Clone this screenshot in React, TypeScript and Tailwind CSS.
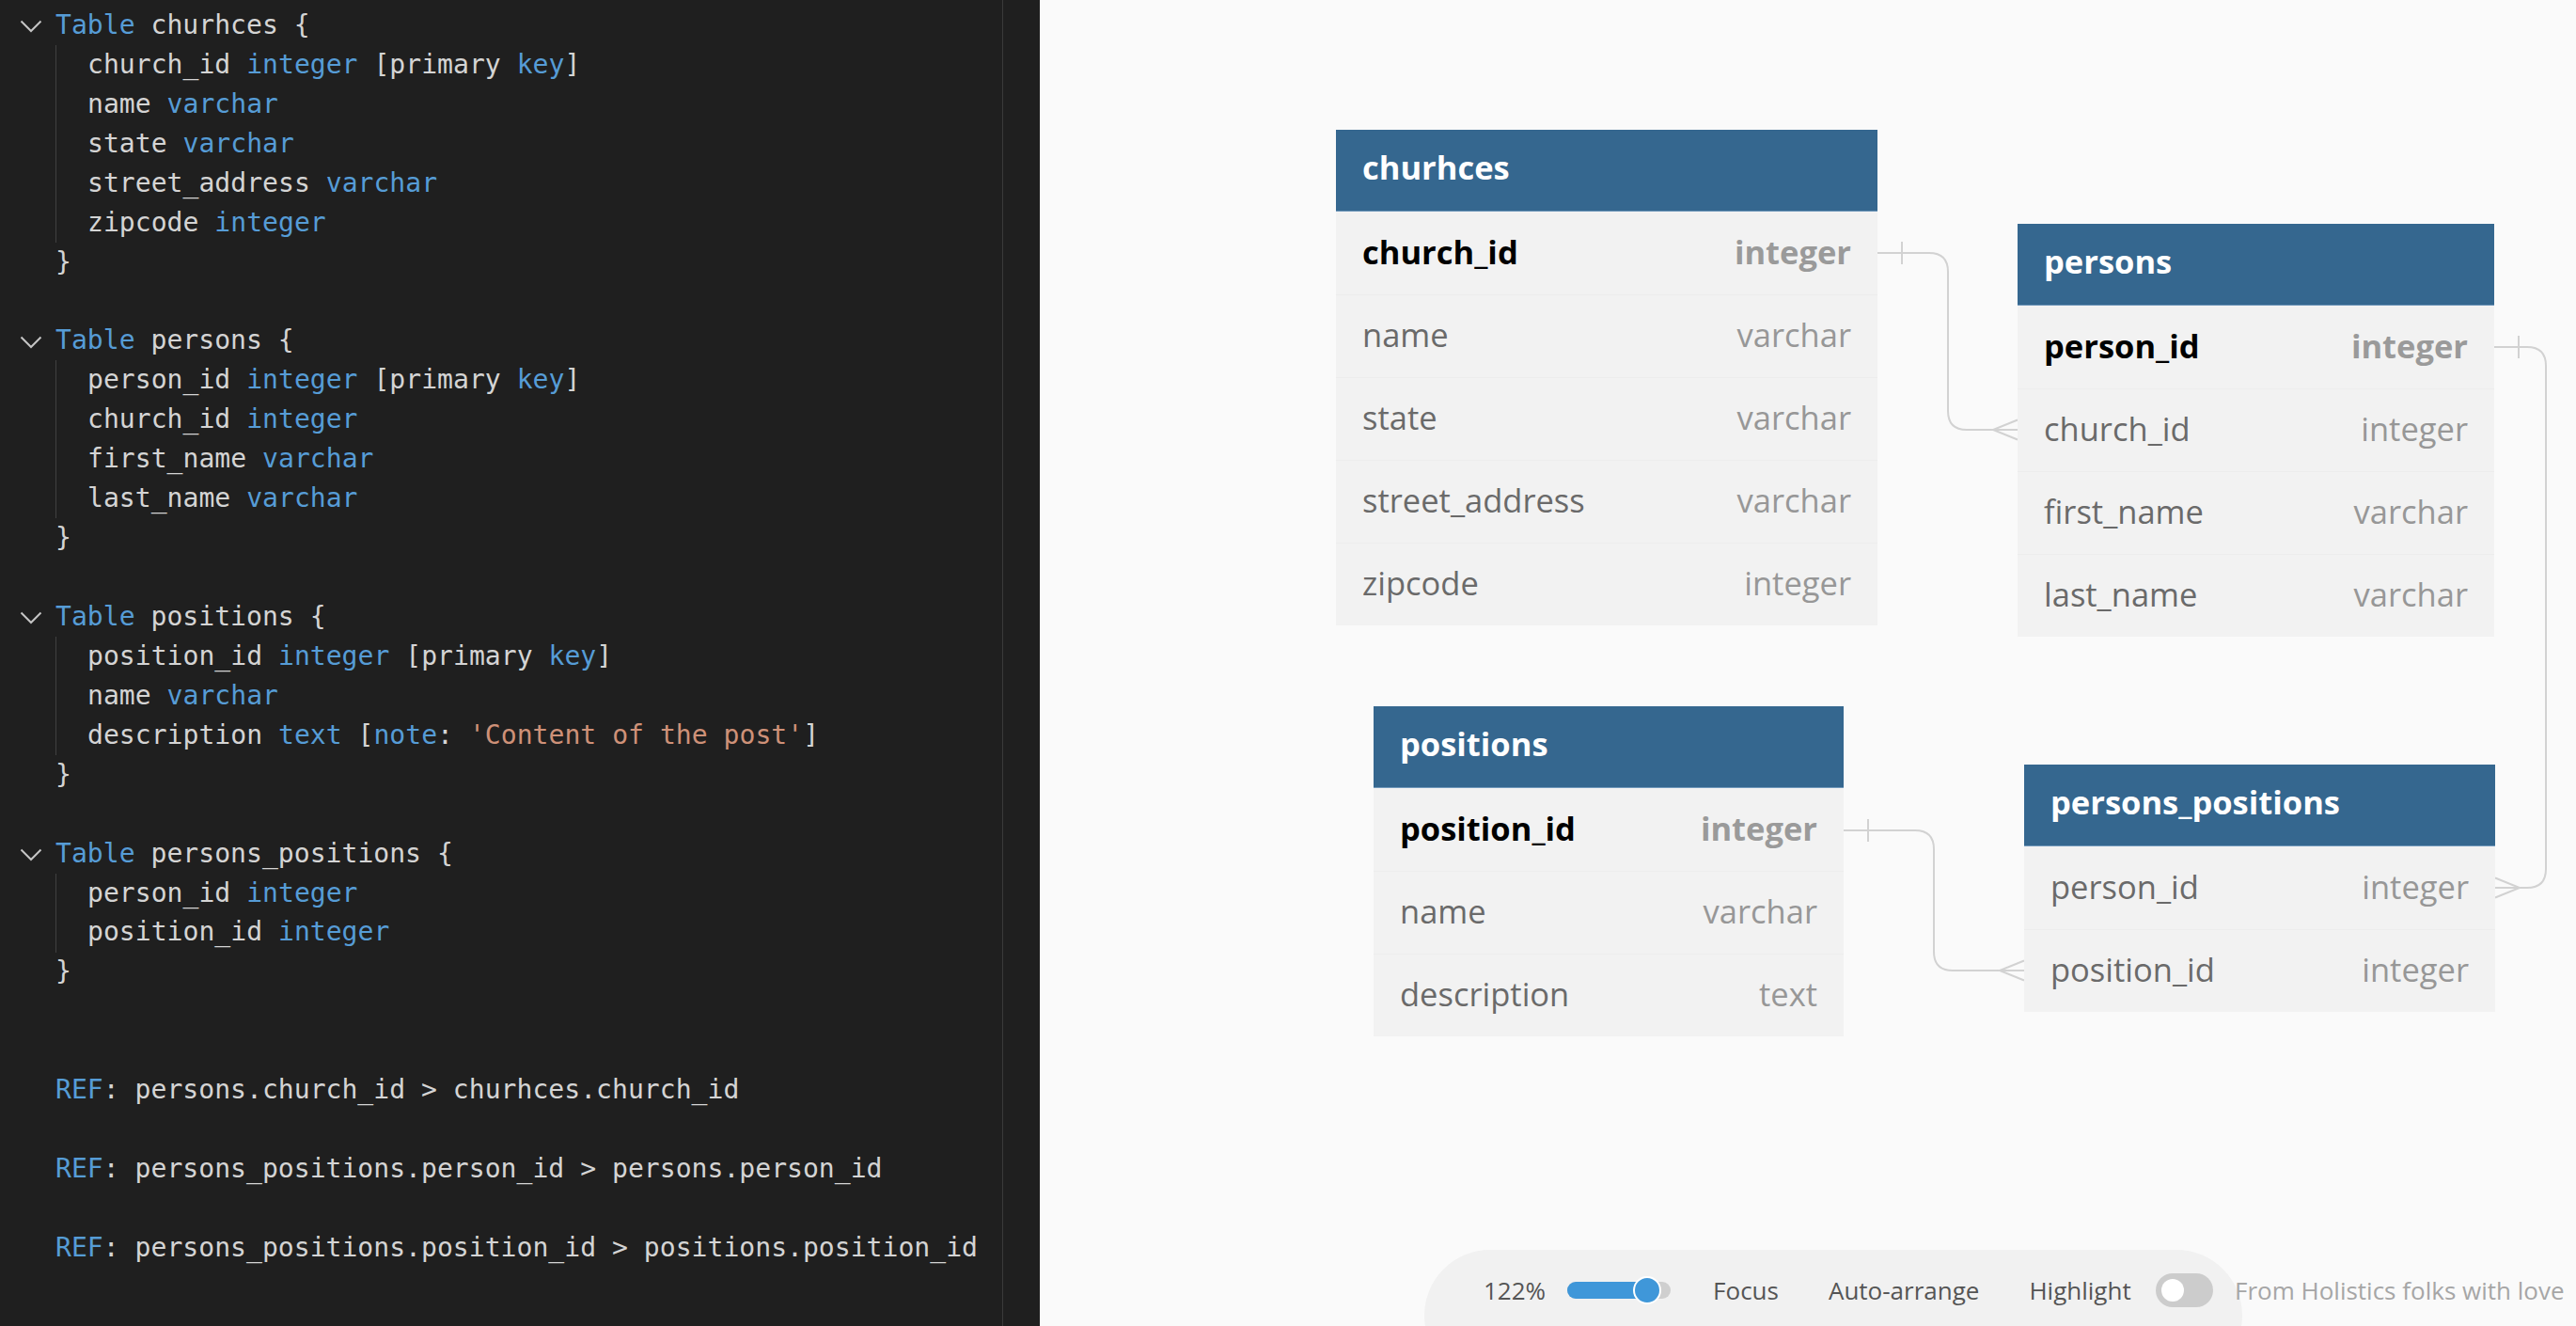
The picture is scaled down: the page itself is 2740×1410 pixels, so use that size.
import React from 'react';

type Tok = [string, 'k' | 't' | 's'];
type Line =
  | { kind: 'table'; name: string }
  | { kind: 'field'; toks: Tok[] }
  | { kind: 'close' }
  | { kind: 'blank' }
  | { kind: 'ref'; text: string };

const TONE = {
  k: 'text-[#569cd6]',
  t: 'text-[#d4d4d4]',
  s: 'text-[#ce9178]',
};

const f = (name: string, type: string, extra?: Tok[]): Line => ({
  kind: 'field',
  toks: [[name + ' ', 't'], [type, 'k'], ...(extra ?? [])],
});
const pk: Tok[] = [[' [primary ', 't'], ['key', 'k'], [']', 't']];

const LINES: Line[] = [
  { kind: 'table', name: 'churhces' },
  f('church_id', 'integer', pk),
  f('name', 'varchar'),
  f('state', 'varchar'),
  f('street_address', 'varchar'),
  f('zipcode', 'integer'),
  { kind: 'close' },
  { kind: 'blank' },
  { kind: 'table', name: 'persons' },
  f('person_id', 'integer', pk),
  f('church_id', 'integer'),
  f('first_name', 'varchar'),
  f('last_name', 'varchar'),
  { kind: 'close' },
  { kind: 'blank' },
  { kind: 'table', name: 'positions' },
  f('position_id', 'integer', pk),
  f('name', 'varchar'),
  f('description', 'text', [
    [' [', 't'],
    ['note', 'k'],
    [': ', 't'],
    ["'Content of the post'", 's'],
    [']', 't'],
  ]),
  { kind: 'close' },
  { kind: 'blank' },
  { kind: 'table', name: 'persons_positions' },
  f('person_id', 'integer'),
  f('position_id', 'integer'),
  { kind: 'close' },
  { kind: 'blank' },
  { kind: 'blank' },
  { kind: 'ref', text: ': persons.church_id > churhces.church_id' },
  { kind: 'blank' },
  { kind: 'ref', text: ': persons_positions.person_id > persons.person_id' },
  { kind: 'blank' },
  { kind: 'ref', text: ': persons_positions.position_id > positions.position_id' },
];

function CodeLine({ line }: { line: Line }) {
  const row = 'relative flex h-[41.94px] items-center whitespace-pre';
  if (line.kind === 'table') {
    return (
      <div className={row}>
        <svg className="absolute left-[21px] top-[15px]" width="24" height="14" viewBox="0 0 24 14">
          <polyline points="1.5,1.5 12,12 22.5,1.5" fill="none" stroke="#c5c5c5" strokeWidth="2" />
        </svg>
        <span className="pl-[59px]">
          <span className={TONE.k}>Table</span>
          <span className={TONE.t}> {line.name} {'{'}</span>
        </span>
      </div>
    );
  }
  if (line.kind === 'field') {
    return (
      <div className={row}>
        <div className="ml-[59px] flex h-full items-center border-l border-[#404040] pl-[33px]">
          {line.toks.map(([text, tone], i) => (
            <span key={i} className={TONE[tone]}>
              {text}
            </span>
          ))}
        </div>
      </div>
    );
  }
  if (line.kind === 'close') {
    return (
      <div className={row}>
        <span className={`pl-[59px] ${TONE.t}`}>{'}'}</span>
      </div>
    );
  }
  if (line.kind === 'ref') {
    return (
      <div className={row}>
        <span className="pl-[59px]">
          <span className={TONE.k}>REF</span>
          <span className={TONE.t}>{line.text}</span>
        </span>
      </div>
    );
  }
  return <div className={row} />;
}

interface Col {
  name: string;
  type: string;
  pk?: boolean;
}

function DbTable({ name, cols, className }: { name: string; cols: Col[]; className: string }) {
  return (
    <div className={`absolute bg-[#f2f2f2] ${className}`}>
      <div className="flex h-[87px] items-center border-b border-[#7098bb] bg-[#35678f] px-[28px] pb-[7px] text-[34.5px] font-bold text-white">
        {name}
      </div>
      {cols.map((c, i) => (
        <div
          key={c.name}
          className={`flex h-[88px] items-center justify-between px-[28px] pb-[3px] text-[34.5px] ${
            i > 0 ? 'border-t border-[#ededed]' : ''
          }`}
        >
          <span className={c.pk ? 'font-bold text-black' : 'text-[#6a6a6a]'}>{c.name}</span>
          <span className={c.pk ? 'font-bold text-[#9a9a9a]' : 'text-[#979797]'}>{c.type}</span>
        </div>
      ))}
    </div>
  );
}

export default function App() {
  return (
    <div className="flex h-[1410px] w-[2740px] overflow-hidden">
      {/* Editor */}
      <div className="flex h-full w-[1106px] shrink-0 bg-[#1f1f1f]">
        <div className="h-full w-[1067px] border-r border-[#3a3a3a] pt-[6px] text-[28.1px] [font-family:'DejaVu_Sans_Mono',monospace]">
          {LINES.map((l, i) => (
            <CodeLine key={i} line={l} />
          ))}
        </div>
      </div>

      {/* Diagram canvas */}
      <div className="relative h-full flex-1 bg-[#fafafa] [font-family:'Open_Sans',sans-serif]">
        <svg className="pointer-events-none absolute inset-0" width="1634" height="1410">
          <g fill="none" stroke="#d2d2d2" strokeWidth="2">
            <path d="M891 269 H946 Q966 269 966 289 V437 Q966 457 986 457 H1040" />
            <path d="M917 257 V281" />
            <path d="M1040 446.5 L1014 457 L1040 467.5" />

            <path d="M1547 369 H1582 Q1602 369 1602 389 V924 Q1602 944 1582 944 H1548" />
            <path d="M1573 357 V381" />
            <path d="M1548 933.5 L1574 944 L1548 954.5" />

            <path d="M855 883 H931 Q951 883 951 903 V1012 Q951 1032 971 1032 H1047" />
            <path d="M881 871 V895" />
            <path d="M1047 1021.5 L1021 1032 L1047 1042.5" />
          </g>
        </svg>

        <DbTable
          name="churhces"
          className="left-[315px] top-[138px] w-[576px]"
          cols={[
            { name: 'church_id', type: 'integer', pk: true },
            { name: 'name', type: 'varchar' },
            { name: 'state', type: 'varchar' },
            { name: 'street_address', type: 'varchar' },
            { name: 'zipcode', type: 'integer' },
          ]}
        />
        <DbTable
          name="persons"
          className="left-[1040px] top-[238px] w-[507px]"
          cols={[
            { name: 'person_id', type: 'integer', pk: true },
            { name: 'church_id', type: 'integer' },
            { name: 'first_name', type: 'varchar' },
            { name: 'last_name', type: 'varchar' },
          ]}
        />
        <DbTable
          name="positions"
          className="left-[355px] top-[751px] w-[500px]"
          cols={[
            { name: 'position_id', type: 'integer', pk: true },
            { name: 'name', type: 'varchar' },
            { name: 'description', type: 'text' },
          ]}
        />
        <DbTable
          name="persons_positions"
          className="left-[1047px] top-[813px] w-[501px]"
          cols={[
            { name: 'person_id', type: 'integer' },
            { name: 'position_id', type: 'integer' },
          ]}
        />

        {/* Bottom toolbar */}
        <div className="absolute left-[409px] top-[1329px] flex items-start text-[26px]">
          <div className="h-[140px] w-[870px] rounded-[70px] bg-[#f1f1f1]">
            <div className="flex h-[86px] items-center pl-[63px] text-[#555555]">
              <span>122%</span>
              <div className="relative ml-[23px] h-[18px] w-[110px] rounded-full bg-[#cfcfcf]">
                <div className="h-full w-[85px] rounded-full bg-[#3f97d9]" />
                <div className="absolute left-[70px] top-[-6px] h-[30px] w-[30px] rounded-full border-2 border-white bg-[#3f97d9]" />
              </div>
              <span className="ml-[45px]">Focus</span>
              <span className="ml-[53px]">Auto-arrange</span>
              <span className="ml-[53px]">Highlight</span>
              <div className="ml-[26px] flex h-[36px] w-[61px] items-center rounded-full bg-[#cccccc] pl-[6px]">
                <div className="h-[24px] w-[24px] rounded-full bg-white" />
              </div>
            </div>
          </div>
          <div className="-ml-[8px] flex h-[86px] items-center whitespace-nowrap text-[#a6a6a6]">
            From Holistics folks with love
          </div>
        </div>
      </div>
    </div>
  );
}
